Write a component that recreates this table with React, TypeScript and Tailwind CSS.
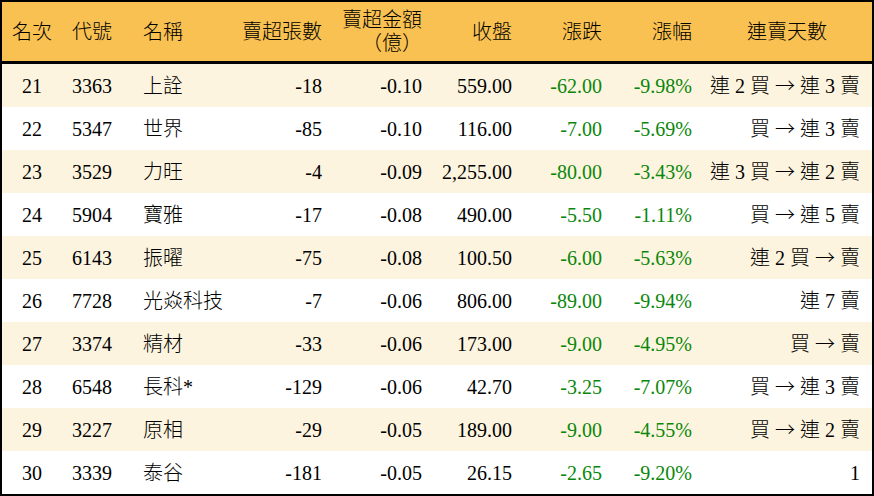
type Row = {
  rank: number;
  code: string;
  name: string;
  lots: string;
  amount: string;
  close: string;
  change: string;
  pct: string;
  streak: string;
};

const rows: Row[] = [
  { rank: 21, code: "3363", name: "上詮", lots: "-18", amount: "-0.10", close: "559.00", change: "-62.00", pct: "-9.98%", streak: "連 2 買 → 連 3 賣" },
  { rank: 22, code: "5347", name: "世界", lots: "-85", amount: "-0.10", close: "116.00", change: "-7.00", pct: "-5.69%", streak: "買 → 連 3 賣" },
  { rank: 23, code: "3529", name: "力旺", lots: "-4", amount: "-0.09", close: "2,255.00", change: "-80.00", pct: "-3.43%", streak: "連 3 買 → 連 2 賣" },
  { rank: 24, code: "5904", name: "寶雅", lots: "-17", amount: "-0.08", close: "490.00", change: "-5.50", pct: "-1.11%", streak: "買 → 連 5 賣" },
  { rank: 25, code: "6143", name: "振曜", lots: "-75", amount: "-0.08", close: "100.50", change: "-6.00", pct: "-5.63%", streak: "連 2 買 → 賣" },
  { rank: 26, code: "7728", name: "光焱科技", lots: "-7", amount: "-0.06", close: "806.00", change: "-89.00", pct: "-9.94%", streak: "連 7 賣" },
  { rank: 27, code: "3374", name: "精材", lots: "-33", amount: "-0.06", close: "173.00", change: "-9.00", pct: "-4.95%", streak: "買 → 賣" },
  { rank: 28, code: "6548", name: "長科*", lots: "-129", amount: "-0.06", close: "42.70", change: "-3.25", pct: "-7.07%", streak: "買 → 連 3 賣" },
  { rank: 29, code: "3227", name: "原相", lots: "-29", amount: "-0.05", close: "189.00", change: "-9.00", pct: "-4.55%", streak: "買 → 連 2 賣" },
  { rank: 30, code: "3339", name: "泰谷", lots: "-181", amount: "-0.05", close: "26.15", change: "-2.65", pct: "-9.20%", streak: "1" },
];

const grid = "grid grid-cols-[60px_70px_100px_100px_100px_90px_90px_90px_170px] items-center";

// the arrow is drawn wider in the reference, so take it from the CJK font
function Streak({ text }: { text: string }) {
  const parts = text.split("→");
  return (
    <>
      {parts.map((p, i) => (
        <span key={i}>
          {i > 0 && <span className="font-['Noto_Sans_CJK_TC',sans-serif] font-light">→</span>}
          {p}
        </span>
      ))}
    </>
  );
}

export default function App() {
  return (
    <div className="w-[874px] h-[496px] bg-white font-['Liberation_Serif','Noto_Sans_CJK_TC',serif] text-[20px] font-light text-black">
      <div className="h-full border-2 border-black overflow-hidden">
        {/* Header */}
        <div className={`${grid} h-[62px] border-b-[3px] border-black bg-[#f9c152]`}>
          <div className="text-center">名次</div>
          <div className="pl-[10px]">代號</div>
          <div className="pl-[11px]">名稱</div>
          <div className="pr-[10px] text-right">賣超張數</div>
          <div className="pr-[10px] text-right leading-[23px]">
            賣超金額
            <br />
            （億）
          </div>
          <div className="pr-[10px] text-right">收盤</div>
          <div className="pr-[10px] text-right">漲跌</div>
          <div className="pr-[10px] text-right">漲幅</div>
          <div className="text-center">連賣天數</div>
        </div>

        {/* Rows */}
        {rows.map((r, i) => (
          <div
            key={r.rank}
            className={`${grid} h-[43px] ${i % 2 === 0 ? "bg-[#fdf4df]" : "bg-white"}`}
          >
            <div className="text-center">{r.rank}</div>
            <div className="pl-[10px]">{r.code}</div>
            <div className="pl-[11px] whitespace-nowrap">{r.name}</div>
            <div className="pr-[10px] text-right">{r.lots}</div>
            <div className="pr-[10px] text-right">{r.amount}</div>
            <div className="pr-[10px] text-right">{r.close}</div>
            <div className="pr-[10px] text-right text-[#0a870a]">{r.change}</div>
            <div className="pr-[10px] text-right text-[#0a870a]">{r.pct}</div>
            <div className="pr-[12px] text-right whitespace-nowrap">
              <Streak text={r.streak} />
            </div>
          </div>
        ))}
      </div>
    </div>
  );
}
